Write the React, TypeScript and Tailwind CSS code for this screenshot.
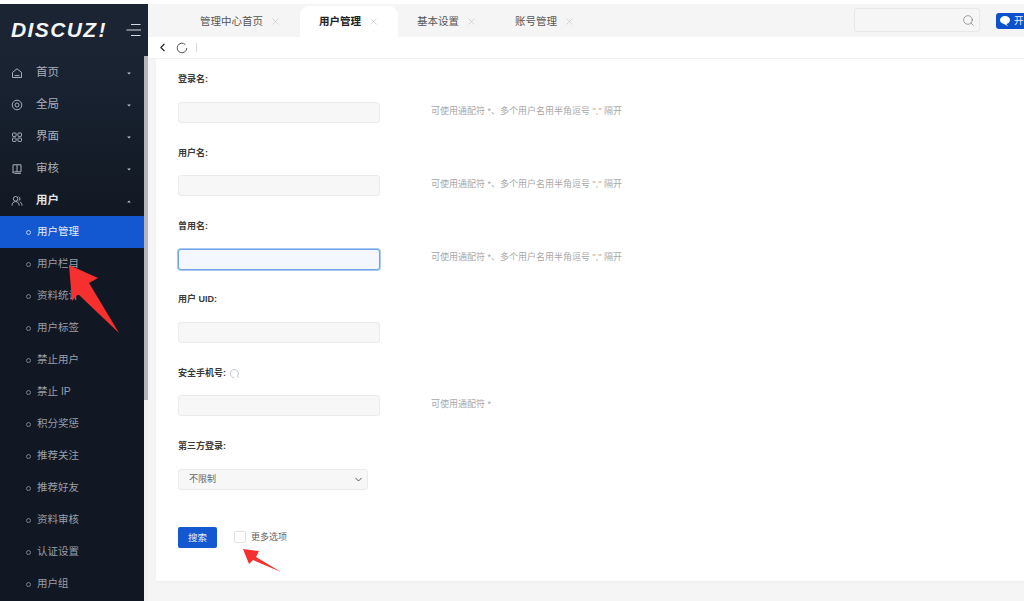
import React from "react";
import { ChevronLeft, X, Search } from "lucide-react";

const cjk = { fontFamily: '"Liberation Sans","Noto Sans CJK SC",sans-serif' };

function Caret({ up }: { up?: boolean }) {
  return (
    <svg width="4" height="3" viewBox="0 0 4 3" className="ml-auto mr-[13px]">
      <path d={up ? "M2 .4L3.800 2.600H.2z" : "M2 2.600L.2.400h3.600z"} fill="#c3c8d0" />
    </svg>
  );
}

const iconProps = {
  width: 12,
  height: 12,
  viewBox: "0 0 12 12",
  fill: "none",
  stroke: "#a8afb9",
  strokeWidth: 1,
};

const icons: Record<string, React.ReactNode> = {
  home: (
    <svg {...iconProps}>
      <path d="M1.500 5.400L6 1.800l4.500 3.600v5.100h-9z" />
      <path d="M3.500 8.600h5" />
    </svg>
  ),
  global: (
    <svg {...iconProps}>
      <circle cx="6" cy="6" r="4.800" />
      <circle cx="6" cy="6" r="2" />
    </svg>
  ),
  ui: (
    <svg {...iconProps}>
      <rect x="1.500" y="2" width="3.600" height="3.400" rx=".6" />
      <rect x="6.900" y="2" width="3.600" height="3.400" rx=".6" />
      <rect x="1.500" y="7" width="3.600" height="3.400" rx=".6" />
      <rect x="6.900" y="7" width="3.600" height="3.400" rx=".6" />
    </svg>
  ),
  audit: (
    <svg {...iconProps}>
      <path d="M2 1.800h8v7H3.400A1.400 1.400 0 0 0 2 10.200z" />
      <path d="M3.400 10.400H10M6 1.800v7" />
    </svg>
  ),
  user: (
    <svg {...iconProps}>
      <circle cx="4.600" cy="3.800" r="2.300" />
      <path d="M1 10.600c0-2.600 1.500-4 3.600-4s3.600 1.400 3.600 4" />
      <path d="M7.600 1.700a2.300 2.300 0 0 1 0 4.200M9 6.900c1.200.6 2 1.800 2 3.700" />
    </svg>
  ),
};

const mainMenu = [
  { icon: "home", label: "首页" },
  { icon: "global", label: "全局" },
  { icon: "ui", label: "界面" },
  { icon: "audit", label: "审核" },
];

const subMenu = [
  "用户栏目",
  "资料统计",
  "用户标签",
  "禁止用户",
  "禁止 IP",
  "积分奖惩",
  "推荐关注",
  "推荐好友",
  "资料审核",
  "认证设置",
  "用户组",
];

function Sub({ label, active }: { label: string; active?: boolean }) {
  return (
    <div
      className={`flex h-[32px] shrink-0 items-center pl-[26px] text-[10.5px] ${
        active ? "bg-[#1358d0] text-[#e8eefa]" : "text-[#9a9fa8]"
      }`}
    >
      <span
        className={`mr-[6px] h-[5px] w-[5px] rounded-full border ${
          active ? "border-[#b9cdf2]" : "border-[#7c828b]"
        }`}
      />
      {label}
    </div>
  );
}

function Sidebar() {
  return (
    <aside className="flex h-full w-[148px] shrink-0 flex-col bg-[#1a2433]">
      <div className="flex h-[52px] shrink-0 items-center pl-[11px]">
        <span
          className="-mt-[2px] w-[100px] whitespace-nowrap text-[21px] font-bold italic leading-none tracking-[1.4px] text-[#f4f5f6]"
          style={{ fontFamily: '"Liberation Sans",sans-serif' }}
        >
          DISCUZ<span className="ml-[1px]">!</span>
        </span>
        <svg width="16" height="16" viewBox="0 0 16 16" stroke="#d5d9df" strokeWidth="1.1" className="ml-[15px]">
          <path d="M5 2.500h9.500M.5 8h14.500M5 13.500h9.500" />
        </svg>
      </div>
      <div className="flex min-h-0 flex-1">
        <nav className="flex w-[144px] shrink-0 flex-col overflow-hidden bg-gradient-to-b from-[#1a2433] from-[0%] to-[#111823] to-[30%]">
          {mainMenu.map((m) => (
            <div key={m.label} className="flex h-[32px] shrink-0 items-center pl-[11px] pt-[2px] text-[11.5px] text-[#a8afb9]">
              <span className="mr-[13px] flex w-[12px]">{icons[m.icon]}</span>
              {m.label}
              <Caret />
            </div>
          ))}
          <div className="flex h-[32px] shrink-0 items-center pl-[11px] pt-[2px] text-[11.5px] font-bold text-[#dfe3e8]">
            <span className="mr-[13px] flex w-[12px]">{icons.user}</span>
            用户
            <Caret up />
          </div>
          <Sub label="用户管理" active />
          {subMenu.map((s) => (
            <Sub key={s} label={s} />
          ))}
        </nav>
        <div className="w-[4px] shrink-0 bg-[#f1f1f1]">
          <div className="h-[344px] w-full bg-[#b4b6b9]" />
        </div>
      </div>
    </aside>
  );
}

const tabs = [
  { label: "管理中心首页" },
  { label: "用户管理", active: true },
  { label: "基本设置" },
  { label: "账号管理" },
];

function TopBar() {
  return (
    <div className="flex h-[33px] shrink-0 items-end bg-[#f5f5f5] pl-[33px]">
      {tabs.map((t) => (
        <div
          key={t.label}
          className={`flex h-[31px] items-center rounded-t-[9px] px-[19px] text-[10.5px] ${
            t.active ? "bg-white font-bold text-[#222]" : "text-[#555]"
          }`}
        >
          {t.label}
          <X size={11} strokeWidth={1} color="#b4b4b4" className="ml-[7px]" />
        </div>
      ))}
      <div className="mb-[5px] ml-auto flex h-[24px] w-[126px] items-center justify-end rounded-[3px] border border-[#e8e8e8] bg-[#f6f6f6] pr-[4px]">
        <Search size={13} strokeWidth={1} color="#555" />
      </div>
      <div className="mb-[8px] ml-[16px] flex h-[16px] w-[28px] shrink-0 items-center rounded-l-[3px] bg-[#0d52cc] pl-[3px] text-[9.5px] leading-none text-[#f0f4fc]">
        <svg width="12" height="12" viewBox="0 0 12 12" className="shrink-0">
          <path d="M6 1c3 0 5 1.700 5 4s-1.800 3.800-3.600 4l1.500 2.200L4.500 8.800C2.400 8.300 1 6.900 1 5c0-2.300 2-4 5-4z" fill="#fff" />
        </svg>
        <span className="ml-[3px]">开</span>
      </div>
    </div>
  );
}

function Toolbar() {
  return (
    <div className="flex h-[22px] shrink-0 items-center border-b border-[#f0f0f0] bg-white pl-[8px]">
      <ChevronLeft size={13} strokeWidth={2} color="#222" />
      <svg width="12" height="12" viewBox="0 0 12 12" fill="none" stroke="#555" strokeWidth="1" className="ml-[7px]">
        <path d="M9.400 2.600A4.800 4.800 0 1 0 10.800 6" />
      </svg>
      <span className="ml-[8px] h-[9px] w-px bg-[#d9d9d9]" />
    </div>
  );
}

const wildHint = "可使用通配符 *、多个用户名用半角逗号 \",\" 隔开";

const fields = [
  { label: "登录名:", hint: wildHint },
  { label: "用户名:", hint: wildHint },
  { label: "曾用名:", hint: wildHint, focus: true },
  { label: "用户 UID:" },
  { label: "安全手机号:", hint: "可使用通配符 *", help: true },
];

function Field({ label, hint, focus, help }: { label: string; hint?: string; focus?: boolean; help?: boolean }) {
  return (
    <div className="h-[73.33px]">
      <div className="flex h-[22px] items-center text-[9px] font-bold text-[#3a3a3a]">
        {label}
        {help && (
          <svg width="11" height="11" viewBox="0 0 11 11" fill="none" stroke="#c4c6c8" strokeWidth="1" className="ml-[3px]">
            <path d="M9.700 9.800L8.200 8.300A4 4 0 1 0 5.500 9.500" />
          </svg>
        )}
      </div>
      <div className="mt-[11px] flex items-center">
        <input
          aria-label={label}
          className={`h-[21px] w-[202px] rounded-[3px] border outline-none ${
            focus
              ? "border-[#6fa2e8] bg-[#f4f8fe] shadow-[0_0_0_1px_#a9c8f2]"
              : "border-[#ebebeb] bg-[#f7f7f7]"
          }`}
        />
        {hint && <span className="-mt-[2px] ml-[51px] text-[9px] text-[#a8a8a8]">{hint}</span>}
      </div>
    </div>
  );
}

function Form() {
  return (
    <div className="ml-[8px] flex h-[522px] shrink-0 flex-col bg-white pl-[22px] pt-[10px] shadow-[0_1px_2px_#eeeeee]">
      {fields.map((f) => (
        <Field key={f.label} {...f} />
      ))}
      <div className="h-[73.33px]">
        <div className="flex h-[22px] items-center text-[9px] font-bold text-[#3a3a3a]">第三方登录:</div>
        <div className="mt-[11px] flex h-[21px] w-[190px] items-center justify-between rounded-[3px] border border-[#ebebeb] bg-[#f7f7f7] pl-[10px] pr-[4px] pt-[1px] text-[9px] text-[#666]">
          不限制
          <svg width="9" height="9" viewBox="0 0 9 9" fill="none" stroke="#555" strokeWidth="1">
            <path d="M1.500 3l3 3 3-3" />
          </svg>
        </div>
      </div>
      <div className="mt-[18px] flex items-center">
        <button className="h-[21px] w-[39px] rounded-[2px] bg-[#1358d0] pt-[1px] text-[9.5px] text-[#e8eefa]">搜索</button>
        <span className="ml-[17px] h-[12px] w-[12px] rounded-[2px] border border-[#e2e2e2] bg-white" />
        <span className="ml-[5px] text-[9px] text-[#666]">更多选项</span>
      </div>
    </div>
  );
}

function Arrows() {
  return (
    <svg width="1024" height="601" viewBox="0 0 1024 601" className="pointer-events-none absolute left-0 top-0">
      <path d="M69 265L98 278 89 283 119 333 78 294 72 301z" fill="#f6302e" />
      <path d="M243 549L259 551 256 557 281 572 253 560 249 564z" fill="#f6302e" />
    </svg>
  );
}

export default function App() {
  return (
    <div className="relative h-[601px] w-[1024px] overflow-hidden bg-white pt-[4px]" style={cjk}>
      <div className="flex h-[597px]">
        <Sidebar />
        <main className="flex min-w-0 flex-1 flex-col bg-[#f5f5f5]">
          <TopBar />
          <Toolbar />
          <Form />
        </main>
      </div>
      <Arrows />
    </div>
  );
}
